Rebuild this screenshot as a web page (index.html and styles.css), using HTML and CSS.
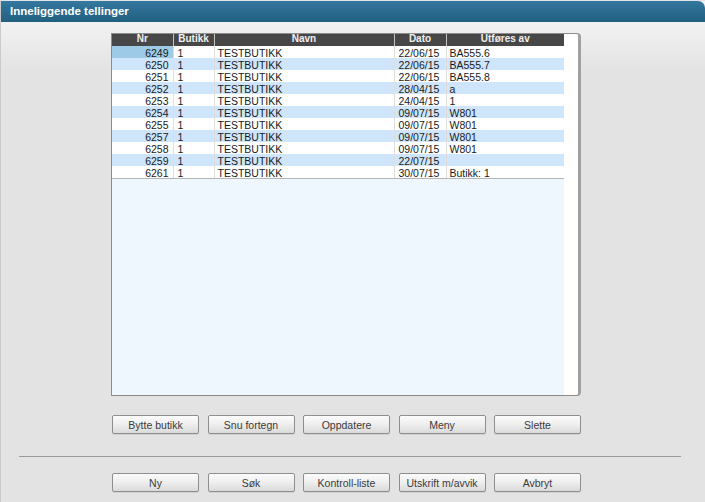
FILE: index.html
```html
<!DOCTYPE html>
<html lang="no">
<head>
<meta charset="utf-8">
<title>Inneliggende tellinger</title>
<link rel="stylesheet" href="styles.css">
</head>
<body>
<div class="window">
  <div class="titlebar">Inneliggende tellinger</div>
  <div class="content">
    <div class="listbox">
      <div class="tablearea">
        <table class="grid">
          <colgroup>
            <col class="c-nr"><col class="c-butikk"><col class="c-navn"><col class="c-dato"><col class="c-utf">
          </colgroup>
          <thead>
            <tr><th>Nr</th><th>Butikk</th><th>Navn</th><th>Dato</th><th>Utføres av</th></tr>
          </thead>
          <tbody>
            <tr class="odd"><td class="num sel">6249</td><td>1</td><td>TESTBUTIKK</td><td>22/06/15</td><td>BA555.6</td></tr>
            <tr class="even"><td class="num">6250</td><td>1</td><td>TESTBUTIKK</td><td>22/06/15</td><td>BA555.7</td></tr>
            <tr class="odd"><td class="num">6251</td><td>1</td><td>TESTBUTIKK</td><td>22/06/15</td><td>BA555.8</td></tr>
            <tr class="even"><td class="num">6252</td><td>1</td><td>TESTBUTIKK</td><td>28/04/15</td><td>a</td></tr>
            <tr class="odd"><td class="num">6253</td><td>1</td><td>TESTBUTIKK</td><td>24/04/15</td><td>1</td></tr>
            <tr class="even"><td class="num">6254</td><td>1</td><td>TESTBUTIKK</td><td>09/07/15</td><td>W801</td></tr>
            <tr class="odd"><td class="num">6255</td><td>1</td><td>TESTBUTIKK</td><td>09/07/15</td><td>W801</td></tr>
            <tr class="even"><td class="num">6257</td><td>1</td><td>TESTBUTIKK</td><td>09/07/15</td><td>W801</td></tr>
            <tr class="odd"><td class="num">6258</td><td>1</td><td>TESTBUTIKK</td><td>09/07/15</td><td>W801</td></tr>
            <tr class="even"><td class="num">6259</td><td>1</td><td>TESTBUTIKK</td><td>22/07/15</td><td></td></tr>
            <tr class="odd last"><td class="num">6261</td><td>1</td><td>TESTBUTIKK</td><td>30/07/15</td><td>Butikk: 1</td></tr>
          </tbody>
        </table>
      </div>
      <div class="scrollstrip"></div>
    </div>

    <div class="btnrow first">
      <button class="btn">Bytte butikk</button>
      <button class="btn">Snu fortegn</button>
      <button class="btn">Oppdatere</button>
      <button class="btn">Meny</button>
      <button class="btn">Slette</button>
    </div>

    <div class="divider"></div>

    <div class="btnrow second">
      <button class="btn">Ny</button>
      <button class="btn">Søk</button>
      <button class="btn">Kontroll-liste</button>
      <button class="btn">Utskrift m/avvik</button>
      <button class="btn">Avbryt</button>
    </div>
  </div>
</div>
</body>
</html>
```

FILE: styles.css
```css
html, body {
  margin: 0;
  padding: 0;
}
body {
  background: #e3e3e3;
  font-family: "Liberation Sans", Arial, sans-serif;
  width: 705px;
  height: 502px;
  overflow: hidden;
}
.window {
  width: 705px;
  height: 502px;
  box-sizing: border-box;
  border-left: 1px solid #cbcbcb;
  background: linear-gradient(to bottom, #f4f4f4 0px, #f2f2f2 22px, #e3e3e3 70px, #e3e3e3 100%);
}
.titlebar {
  margin-top: 1px;
  height: 21px;
  line-height: 20px;
  padding-left: 9px;
  color: #ffffff;
  font-weight: bold;
  font-size: 11.5px;
  border-radius: 0 7px 0 0;
  background: linear-gradient(to bottom, #3479a0 0%, #2a6b8f 50%, #22607f 100%);
}
.content {
  padding-top: 11px;
}
.listbox {
  margin-left: 110px;
  width: 466px;
  height: 361px;
  display: flex;
  background: #ffffff;
  border-top: 1px solid #8c8c8c;
  border-left: 1px solid #8c8c8c;
  border-bottom: 1px solid #8c8c8c;
  border-right: 3px solid #a0a0a0;
  border-radius: 0 4px 4px 0;
}
.tablearea {
  width: 452px;
  height: 361px;
  background: #eef6fe;
}
.scrollstrip {
  flex: 1;
  background: #ffffff;
  border-radius: 0 3px 3px 0;
}
.grid {
  border-collapse: collapse;
  table-layout: fixed;
  width: 452px;
  font-size: 10.5px;
  color: #1a1a1a;
}
.c-nr { width: 61px; }
.c-butikk { width: 41px; }
.c-navn { width: 180px; }
.c-dato { width: 52px; }
.c-utf { width: 118px; }
.grid th {
  height: 10px;
  padding: 0 0 2px 0;
  line-height: 10px;
  font-size: 10px;
  background: #474747;
  color: #f0f0f0;
  font-weight: bold;
  text-align: center;
  border-right: 1px solid #c4c4c4;
}
.grid th:last-child { border-right: none; }
.grid td {
  height: 9px;
  padding: 3px 0 0 3px;
  line-height: 9px;
  white-space: nowrap;
  border-right: 1px solid #dedede;
}
.grid td:last-child { border-right: none; }
.grid td:nth-child(2) { padding-left: 4px; }
.grid td:nth-child(4) { padding-left: 4px; }
.grid td.num {
  text-align: right;
  padding: 3px 4px 0 0;
}
.grid tr.odd td { background: #ffffff; }
.grid tr.even td { background: #cfe5fb; }
.grid tr td.sel { background: #9dcae6; }
.grid tr.last td { border-bottom: 1px solid #b5b5b5; }

.btnrow {
  margin-left: 111px;
  width: 469px;
  display: flex;
  justify-content: space-between;
}
.btnrow.first { margin-top: 19px; }
.btnrow.second { margin-top: 16px; }
.btn {
  width: 87px;
  height: 19px;
  margin: 0;
  padding: 0;
  box-sizing: border-box;
  font-family: "Liberation Sans", Arial, sans-serif;
  font-size: 10.5px;
  color: #3a3a3a;
  border: 1px solid #8e8e8e;
  border-radius: 2px;
  background: linear-gradient(to bottom, #fbfbfb 0%, #f0f0f0 45%, #dadada 100%);
  box-shadow: 0 1px 0 rgba(0,0,0,0.08);
}
.divider {
  margin-top: 22px;
  margin-left: 18px;
  width: 662px;
  height: 1px;
  background: #9a9a9a;
}
```
